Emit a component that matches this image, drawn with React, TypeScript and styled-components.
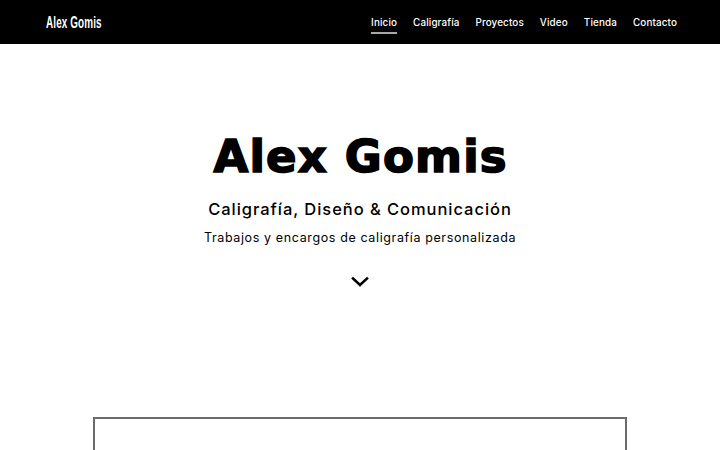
import styled, { createGlobalStyle } from "styled-components";

const GlobalStyle = createGlobalStyle`
  html, body {
    margin: 0;
    padding: 0;
    background: #ffffff;
    font-family: Inter, "Liberation Sans", sans-serif;
    color: #000;
    overflow: hidden;
  }
`;

const navItems = ["Inicio", "Caligrafía", "Proyectos", "Video", "Tienda", "Contacto"];

const Header = styled.header`
  height: 44px;
  background: #000;
  display: flex;
  align-items: center;
  justify-content: space-between;
  padding: 0 43px 0 46px;
`;

const Logo = styled.a`
  display: inline-block;
  font-family: "Liberation Sans", sans-serif;
  font-weight: 700;
  font-size: 16.5px;
  letter-spacing: 0.2px;
  color: #fff;
  text-decoration: none;
  transform: scaleX(0.6);
  transform-origin: left center;
`;

const Nav = styled.nav`
  display: flex;
  gap: 16px;
  height: 100%;
`;

const NavLink = styled.a<{ $active?: boolean }>`
  position: relative;
  display: flex;
  align-items: center;
  font-family: Inter, sans-serif;
  font-size: 9.9px;
  font-weight: 500;
  letter-spacing: 0.12px;
  color: #fff;
  text-decoration: none;
  &::after {
    content: "";
    position: absolute;
    left: 0;
    right: 0;
    top: 32px;
    height: 2px;
    background: ${(p) => (p.$active ? "#a8a8a8" : "transparent")};
  }
`;

const Hero = styled.section`
  display: flex;
  flex-direction: column;
  align-items: center;
  padding-top: 86px;
`;

const Title = styled.h1`
  margin: 0;
  font-family: "DejaVu Sans", sans-serif;
  font-weight: 700;
  font-size: 45px;
  line-height: 54px;
  letter-spacing: 1.2px;
  margin-right: -1.2px;
  -webkit-text-stroke: 1.6px #000;
`;

const Subtitle = styled.h2`
  margin: 14px 0 0;
  font-family: Inter, sans-serif;
  font-weight: 500;
  font-size: 16.5px;
  line-height: 22px;
  letter-spacing: 0.95px;
`;

const Tagline = styled.p`
  margin: 10px 0 0;
  font-family: Inter, sans-serif;
  font-weight: 400;
  font-size: 12.5px;
  line-height: 16px;
  letter-spacing: 0.62px;
`;

const Chevron = styled.svg`
  margin-top: 30px;
  display: block;
`;

const Frame = styled.div`
  margin: 129px 93px 0;
  height: 31px;
  border: 2px solid #6b6b6b;
  border-bottom: none;
`;

export default function App() {
  return (
    <>
      <GlobalStyle />
      <Header>
        <Logo href="#">Alex Gomis</Logo>
        <Nav>
          {navItems.map((item, i) => (
            <NavLink key={item} href="#" $active={i === 0}>
              {item}
            </NavLink>
          ))}
        </Nav>
      </Header>
      <Hero>
        <Title>Alex Gomis</Title>
        <Subtitle>Caligrafía, Diseño &amp; Comunicación</Subtitle>
        <Tagline>Trabajos y encargos de caligrafía personalizada</Tagline>
        <Chevron width="18" height="12" viewBox="0 0 18 12">
          <polyline
            points="2,2.5 9,9 16,2.5"
            fill="none"
            stroke="#000"
            strokeWidth="2.6"
            strokeLinecap="square"
          />
        </Chevron>
      </Hero>
      <Frame />
    </>
  );
}
